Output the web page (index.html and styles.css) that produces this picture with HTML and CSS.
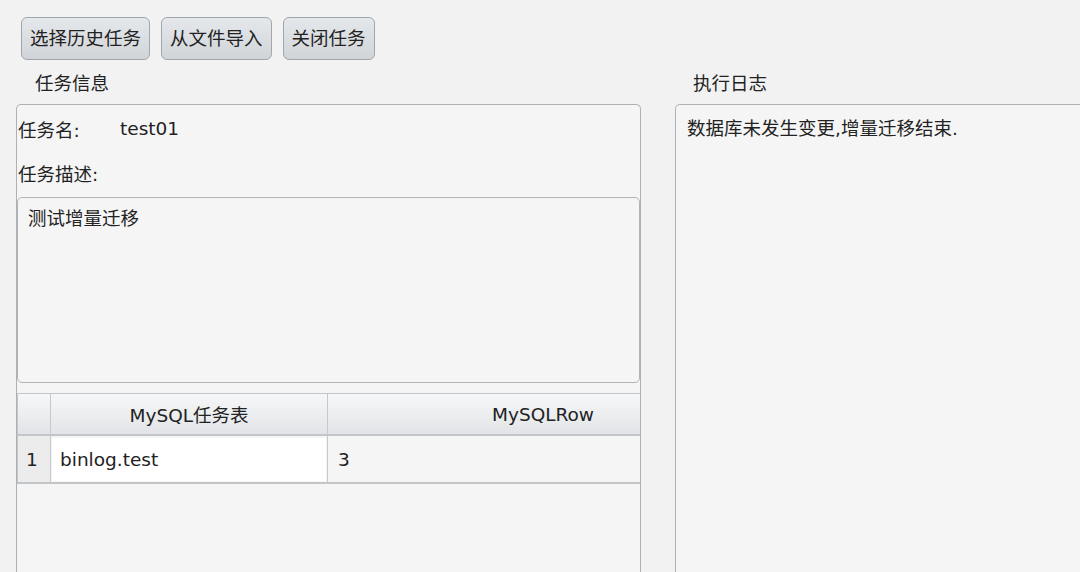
FILE: index.html
```html
<!DOCTYPE html>
<html lang="zh-CN">
<head>
<meta charset="utf-8">
<title>任务</title>
<link rel="stylesheet" href="styles.css">
</head>
<body>
<div class="toolbar">
  <button class="btn">选择历史任务</button>
  <button class="btn">从文件导入</button>
  <button class="btn">关闭任务</button>
</div>
<div class="main">
  <div class="col col-left">
    <div class="title">任务信息</div>
    <div class="panel panel-left">
      <div class="field field-name"><span class="label">任务名:</span><span class="value">test01</span></div>
      <div class="field field-desc"><span class="label">任务描述:</span></div>
      <div class="textarea">测试增量迁移</div>
      <div class="table">
        <div class="th rownum"></div>
        <div class="th">MySQL任务表</div>
        <div class="th th-wide">MySQLRow</div>
        <div class="td rownum">1</div>
        <div class="td td-edit"><div class="edit-box">binlog.test</div></div>
        <div class="td td-plain">3</div>
      </div>
    </div>
  </div>
  <div class="col col-right">
    <div class="title title-right">执行日志</div>
    <div class="panel panel-right">数据库未发生变更,增量迁移结束.</div>
  </div>
</div>
</body>
</html>
```

FILE: styles.css
```css
html, body {
  margin: 0;
  height: 100%;
  overflow: hidden;
}
body {
  background: #f2f2f2;
  font-family: "DejaVu Sans", "Noto Sans CJK SC", sans-serif;
  font-size: 18.5px;
  color: #222;
}
.toolbar {
  display: flex;
  gap: 11px;
  padding: 17px 0 0 21px;
}
.btn {
  height: 43px;
  box-sizing: border-box;
  padding: 0 8px;
  border: 1px solid #a0a6ac;
  border-radius: 6px;
  background: linear-gradient(#e5e8eb, #d0d4d8);
  font: inherit;
  color: #222;
  line-height: 41px;
}
.main {
  display: flex;
  gap: 34px;
  padding-left: 16px;
}
.col {
  display: flex;
  flex-direction: column;
  flex: none;
}
.col-left {
  width: 625px;
}
.col-right {
  width: 440px;
}
.title {
  height: 44px;
  line-height: 47px;
  padding-left: 19px;
}
.title-right {
  padding-left: 18px;
}
.panel {
  height: 470px;
  box-sizing: border-box;
  border: 1px solid #adb1b5;
  border-bottom: none;
  border-radius: 5px 5px 0 0;
  background: #f5f5f5;
}
.panel-left {
  display: flex;
  flex-direction: column;
}
.panel-right {
  padding: 12px 11px;
  line-height: 24px;
}
.field {
  display: flex;
  align-items: center;
  padding-left: 1px;
}
.field-name {
  height: 47px;
}
.field-desc {
  height: 45px;
  padding-bottom: 4px;
  box-sizing: border-box;
}
.label {
  width: 102px;
  flex: none;
}
.textarea {
  height: 186px;
  box-sizing: border-box;
  border: 1px solid #b0b4b8;
  border-radius: 5px;
  padding: 8px 10px;
  line-height: 26px;
}
.table {
  margin-top: 10px;
  display: grid;
  grid-template-columns: 33px 277px 1fr;
  grid-template-rows: 42px 48px;
  border-top: 1px solid #c3c6c9;
  border-left: 1px solid #c3c6c9;
}
.th {
  box-sizing: border-box;
  background: linear-gradient(#f6f7f8, #e2e4e7);
  border-right: 1px solid #c6c9cc;
  border-bottom: 2px solid #c3c6c9;
  display: flex;
  align-items: center;
  justify-content: center;
}
.th-wide {
  justify-content: flex-start;
  padding-left: 164px;
  border-right: none;
}
.td {
  box-sizing: border-box;
  border-right: 1px solid #c6c9cc;
  border-bottom: 2px solid #c3c6c9;
  display: flex;
  align-items: center;
}
.rownum {
  padding-left: 8px;
  background: #ececec;
}
.th.rownum {
  background: linear-gradient(#f6f7f8, #e2e4e7);
}
.td-edit {
  padding: 2px 1px 1px 1px;
  align-items: stretch;
}
.edit-box {
  flex: 1;
  background: #fff;
  padding-left: 8px;
  display: flex;
  align-items: center;
}
.td-plain {
  padding-left: 10px;
  border-right: none;
}
```
